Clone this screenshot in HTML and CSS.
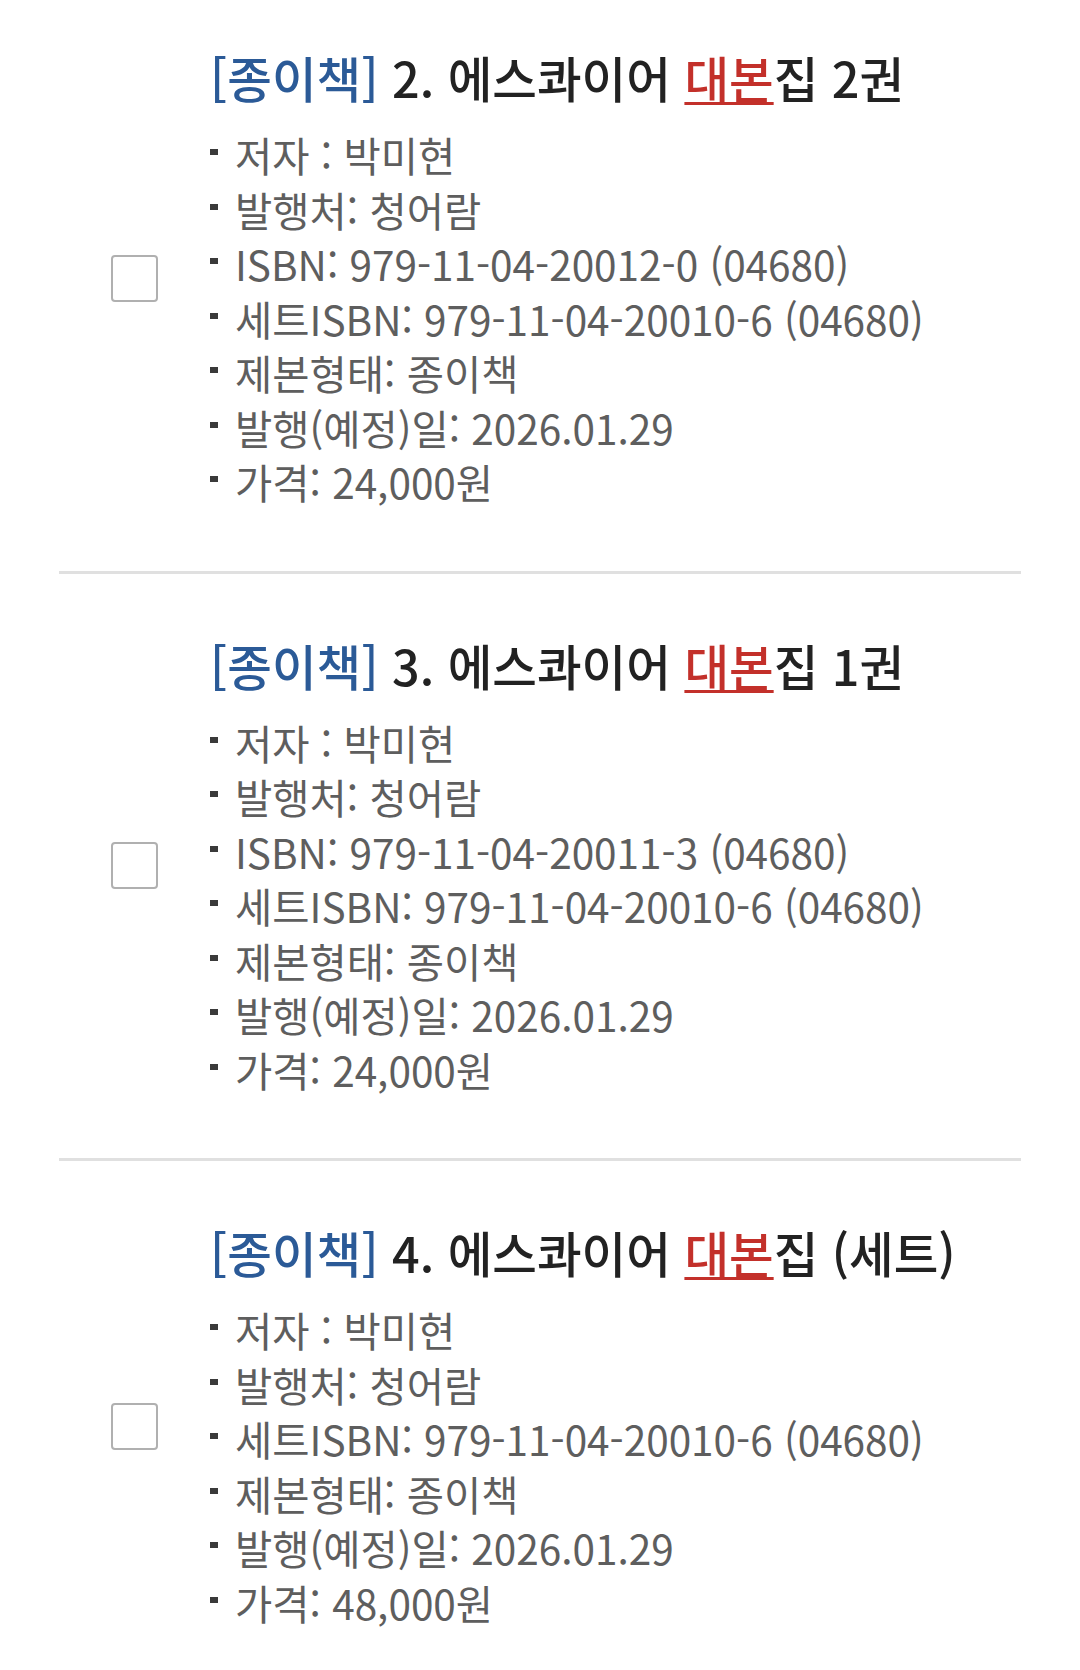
FILE: index.html
```html
<!DOCTYPE html>
<html lang="ko">
  <head>
    <meta charset="UTF-8" />
    <meta name="viewport" content="width=device-width, initial-scale=1.0" />
    <title>에스콰이어 대본집</title>
    <link rel="stylesheet" href="styles.css">
  </head>
  <body>
    <ul class="book-list">
      <li class="book-item">
        <div class="check-col">
          <span class="checkbox"></span>
        </div>
        <div class="book-info">
          <h2 class="book-title">
            <span class="tag">[종이책]</span> 2. 에스콰이어 <span class="hl">대본</span>집 2권
          </h2>
          <ul class="spec">
            <li>저자 : 박미현</li>
            <li>발행처: 청어람</li>
            <li>ISBN: 979-11-04-20012-0 (04680)</li>
            <li>세트ISBN: 979-11-04-20010-6 (04680)</li>
            <li>제본형태: 종이책</li>
            <li>발행(예정)일: 2026.01.29</li>
            <li>가격: 24,000원</li>
          </ul>
        </div>
      </li>
      <li class="book-item">
        <div class="check-col">
          <span class="checkbox"></span>
        </div>
        <div class="book-info">
          <h2 class="book-title">
            <span class="tag">[종이책]</span> 3. 에스콰이어 <span class="hl">대본</span>집 1권
          </h2>
          <ul class="spec">
            <li>저자 : 박미현</li>
            <li>발행처: 청어람</li>
            <li>ISBN: 979-11-04-20011-3 (04680)</li>
            <li>세트ISBN: 979-11-04-20010-6 (04680)</li>
            <li>제본형태: 종이책</li>
            <li>발행(예정)일: 2026.01.29</li>
            <li>가격: 24,000원</li>
          </ul>
        </div>
      </li>
      <li class="book-item">
        <div class="check-col">
          <span class="checkbox"></span>
        </div>
        <div class="book-info">
          <h2 class="book-title">
            <span class="tag">[종이책]</span> 4. 에스콰이어 <span class="hl">대본</span>집 (세트)
          </h2>
          <ul class="spec">
            <li>저자 : 박미현</li>
            <li>발행처: 청어람</li>
            <li>세트ISBN: 979-11-04-20010-6 (04680)</li>
            <li>제본형태: 종이책</li>
            <li>발행(예정)일: 2026.01.29</li>
            <li>가격: 48,000원</li>
          </ul>
        </div>
      </li>
    </ul>
  </body>
</html>
```

FILE: styles.css
```css
* {
  box-sizing: border-box;
  margin: 0;
  padding: 0;
}

body {
  background-color: white;
  font-family: "Noto Sans CJK KR", "Noto Sans", sans-serif;
}

.book-list {
  list-style: none;
  margin: 0 59px;
}

.book-item {
  display: flex;
  align-items: center;
  padding: 61px 0 61px;
  border-bottom: 3px solid #e0e0e0;
}
.book-item:first-child {
  padding-top: 47px;
}
.book-item:last-child {
  border-bottom: none;
}

.check-col {
  width: 151px;
  padding-left: 52px;
  flex-shrink: 0;
}
.checkbox {
  display: block;
  width: 47px;
  height: 47px;
  border: 2px solid #b0b0b0;
  border-radius: 4px;
  background: white;
}

.book-title {
  font-size: 48.5px;
  font-weight: 500;
  line-height: 60px;
  color: #222;
}
.tag {
  color: #2b5a97;
}
.hl {
  color: #c3302a;
  text-decoration: underline;
  text-decoration-thickness: 3px;
  text-underline-offset: 4px;
}

.spec {
  list-style: none;
  margin-top: 21px;
}
.spec li {
  display: flex;
  align-items: center;
  font-size: 40.5px;
  line-height: 54.5px;
  color: #5e5e5e;
}
.spec li::before {
  content: "";
  width: 8px;
  height: 6px;
  margin: 0 17px 6px 0;
  background: #3a3a3a;
  flex-shrink: 0;
}
```
